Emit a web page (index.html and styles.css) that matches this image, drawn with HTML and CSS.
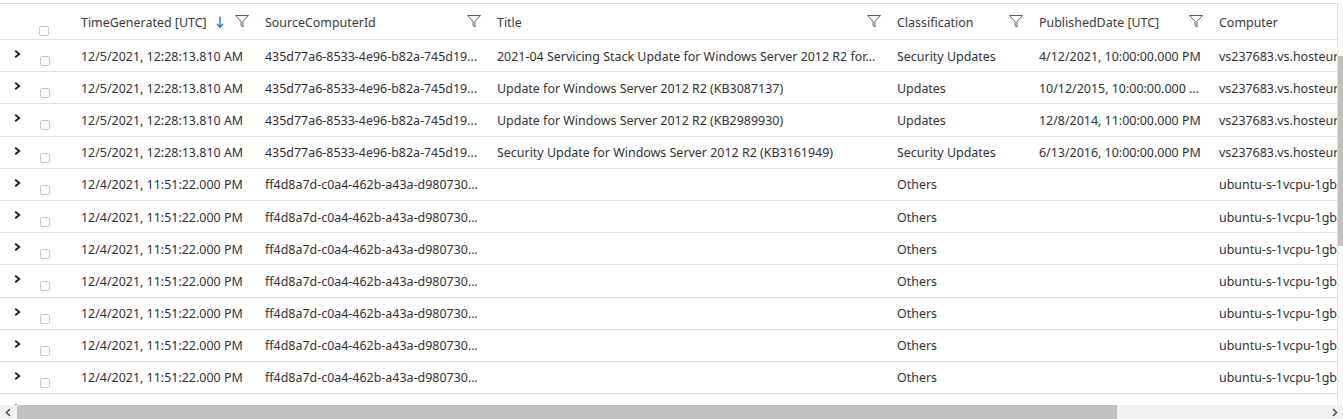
FILE: index.html
```html
<!DOCTYPE html>
<html>
<head>
<meta charset="utf-8">
<link rel="stylesheet" href="styles.css">
</head>
<body>
<div class="frame">
  <div class="main">
    <div class="viewport">
      <div class="table">
        <div class="row head">
          <div class="c c0"><span class="cb"></span></div>
          <div class="c c1"><span class="ht">TimeGenerated [UTC]</span>
            <svg class="sort" width="8" height="12" viewBox="0 0 8 12"><path d="M4 0.5V11 M1 8 L4 11 L7 8" fill="none" stroke="#0078d4" stroke-width="1.3"/></svg>
            <svg class="flt" width="14" height="14" viewBox="0 0 14 14"><path d="M0.5 1.5H13.5L8 7.5V13L6 11.5V7.5Z" fill="none" stroke="#605e5c" stroke-width="1"/></svg></div>
          <div class="c c2"><span class="ht">SourceComputerId</span>
            <svg class="flt" width="14" height="14" viewBox="0 0 14 14"><path d="M0.5 1.5H13.5L8 7.5V13L6 11.5V7.5Z" fill="none" stroke="#605e5c" stroke-width="1"/></svg></div>
          <div class="c c3"><span class="ht">Title</span>
            <svg class="flt" width="14" height="14" viewBox="0 0 14 14"><path d="M0.5 1.5H13.5L8 7.5V13L6 11.5V7.5Z" fill="none" stroke="#605e5c" stroke-width="1"/></svg></div>
          <div class="c c4"><span class="ht">Classification</span>
            <svg class="flt" width="14" height="14" viewBox="0 0 14 14"><path d="M0.5 1.5H13.5L8 7.5V13L6 11.5V7.5Z" fill="none" stroke="#605e5c" stroke-width="1"/></svg></div>
          <div class="c c5"><span class="ht">PublishedDate [UTC]</span>
            <svg class="flt" width="14" height="14" viewBox="0 0 14 14"><path d="M0.5 1.5H13.5L8 7.5V13L6 11.5V7.5Z" fill="none" stroke="#605e5c" stroke-width="1"/></svg></div>
          <div class="c c6"><span class="ht">Computer</span></div>
        </div>
        <div id="body"></div>
      </div>
    </div>
    <div class="vscroll"><div class="vthumb"></div></div>
  </div>
  <div class="hscroll">
    <div class="harrow">
      <svg width="7" height="9" viewBox="0 0 7 9"><path d="M5 1L1.5 4.5L5 8" fill="none" stroke="#505050" stroke-width="1.6"/></svg>
    </div>
    <div class="htrack"><div class="hthumb"></div></div>
    <div class="harrow">
      <svg width="7" height="9" viewBox="0 0 7 9"><path d="M2 1L5.5 4.5L2 8" fill="none" stroke="#505050" stroke-width="1.6"/></svg>
    </div>
  </div>
</div>
<script>
var rows = [
 ["12/5/2021, 12:28:13.810 AM","435d77a6-8533-4e96-b82a-745d19...","2021-04 Servicing Stack Update for Windows Server 2012 R2 for...","Security Updates","4/12/2021, 10:00:00.000 PM","vs237683.vs.hosteurope.de"],
 ["12/5/2021, 12:28:13.810 AM","435d77a6-8533-4e96-b82a-745d19...","Update for Windows Server 2012 R2 (KB3087137)","Updates","10/12/2015, 10:00:00.000 ...","vs237683.vs.hosteurope.de"],
 ["12/5/2021, 12:28:13.810 AM","435d77a6-8533-4e96-b82a-745d19...","Update for Windows Server 2012 R2 (KB2989930)","Updates","12/8/2014, 11:00:00.000 PM","vs237683.vs.hosteurope.de"],
 ["12/5/2021, 12:28:13.810 AM","435d77a6-8533-4e96-b82a-745d19...","Security Update for Windows Server 2012 R2 (KB3161949)","Security Updates","6/13/2016, 10:00:00.000 PM","vs237683.vs.hosteurope.de"]
];
for (var i=0;i<8;i++) rows.push(["12/4/2021, 11:51:22.000 PM","ff4d8a7d-c0a4-462b-a43a-d980730...","","Others","","ubuntu-s-1vcpu-1gb-ams3-01"]);
var html = "";
rows.forEach(function(r){
  html += '<div class="row"><div class="c c0"><svg class="chev" width="7" height="8" viewBox="0 0 7 8"><path d="M1.2 0.8L5.2 4L1.2 7.2" fill="none" stroke="#252423" stroke-width="2"/></svg><span class="cb"></span></div>';
  for (var j=0;j<6;j++) html += '<div class="c c'+(j+1)+'"><span class="t">'+r[j]+'</span></div>';
  html += '</div>';
});
document.getElementById("body").innerHTML = html;
</script>
</body>
</html>
```
FILE: styles.css
```css
html, body { margin: 0; padding: 0; background: #fff; }
body {
  font-family: "Noto Sans", "Open Sans", sans-serif;
  font-size: 12.45px;
  color: #323130;
  overflow: hidden;
}
.frame {
  width: 1343px;
  height: 419px;
  display: flex;
  flex-direction: column;
  overflow: hidden;
}
.main {
  flex: 1;
  min-height: 0;
  display: flex;
  padding-top: 3px;
}
.viewport {
  flex: 1;
  min-width: 0;
  overflow: hidden;
}
.table { width: 1600px; border-top: 1px solid #e1dfdd; }
.row {
  display: flex;
  height: 32.2px;
  box-sizing: border-box;
  border-bottom: 1px solid #e1dfdd;
}
.row.head { height: 36px; }
.c {
  display: flex;
  align-items: center;
  box-sizing: border-box;
  padding: 1px 8px 0;
  white-space: nowrap;
  overflow: hidden;
  flex: none;
}
.c0 { width: 73px; padding: 0; }
.c1 { width: 184px; }
.c2 { width: 232px; }
.c3 { width: 400px; }
.c4 { width: 142px; }
.c5 { width: 180px; }
.c6 { width: 389px; }
.ht { flex: 1; color: #3b3a39; }
.t { overflow: hidden; }
.cb {
  width: 8px;
  height: 8px;
  border: 1px solid #c8c6c4;
  border-radius: 2px;
  margin-left: 39px;
  margin-top: 11px;
}
.head .cb { margin-top: 19px; }
.chev { margin-left: 14px; margin-top: -3px; }
.chev + .cb { margin-left: 19px; }
.sort { margin-right: 11px; margin-top: -1px; margin-left: 1px; }
.flt { margin-top: -2px; }
.vscroll {
  width: 5px;
  flex: none;
  border-left: 1px solid #e1dfdd;
  background: #fafafa;
  display: flex;
  flex-direction: column;
}
.vthumb {
  margin-top: 53px;
  height: 190px;
  background: #c1c1c1;
}
.hscroll {
  height: 14px;
  flex: none;
  display: flex;
  background: #f1f1f1;
}
.harrow {
  width: 17px;
  display: flex;
  align-items: center;
  justify-content: center;
  flex: none;
}
.htrack { flex: 1; display: flex; }
.hthumb { width: 1100px; background: #c1c1c1; }
```
